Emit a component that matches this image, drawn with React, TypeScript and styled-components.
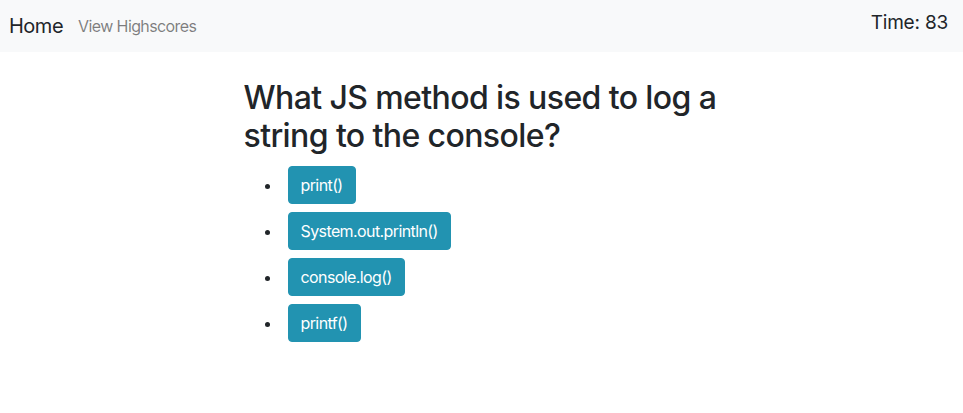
import styled, { createGlobalStyle } from 'styled-components';

const GlobalStyle = createGlobalStyle`
  body {
    margin: 0;
    font-family: 'Inter', 'Liberation Sans', sans-serif;
    color: #212529;
    background: #fff;
  }
`;

const Navbar = styled.nav`
  display: flex;
  align-items: center;
  height: 52px;
  padding: 0 15px 0 9px;
  background: #f8f9fa;
  box-sizing: border-box;
`;

const Brand = styled.a`
  font-size: 20px;
  color: #212529;
  text-decoration: none;
  margin-right: 15px;
  letter-spacing: -0.5px;
`;

const NavLink = styled.a`
  font-size: 16px;
  color: rgba(0, 0, 0, 0.5);
  text-decoration: none;
  letter-spacing: -0.6px;
`;

const Timer = styled.div`
  margin-left: auto;
  font-size: 19px;
  margin-top: -8px;
  letter-spacing: -0.2px;
`;

const Main = styled.main`
  width: 476px;
  margin: 0 auto;
  padding-top: 27px;
`;

const Question = styled.h2`
  font-size: 32px;
  font-weight: 500;
  line-height: 1.2;
  margin: 0 0 6px;
  letter-spacing: -0.6px;
`;

const Choices = styled.ul`
  margin: 0;
  padding-left: 38px;
`;

const Choice = styled.li`
  margin: 0;
  padding: 4px 0 4px 6px;
  line-height: 1;
`;

const ChoiceButton = styled.button`
  font-family: inherit;
  font-size: 16px;
  line-height: 24px;
  padding: 6px 12px;
  color: #fff;
  background: #2293b1;
  border: 1px solid #2293b1;
  border-radius: 4px;
  cursor: pointer;
  letter-spacing: -0.6px;
`;

const answers = ['print()', 'System.out.println()', 'console.log()', 'printf()'];

export default function App() {
  return (
    <>
      <GlobalStyle />
      <Navbar>
        <Brand href="#">Home</Brand>
        <NavLink href="#">View Highscores</NavLink>
        <Timer>Time: 83</Timer>
      </Navbar>
      <Main>
        <Question>What JS method is used to log a string to the console?</Question>
        <Choices>
          {answers.map((a) => (
            <Choice key={a}>
              <ChoiceButton>{a}</ChoiceButton>
            </Choice>
          ))}
        </Choices>
      </Main>
    </>
  );
}
